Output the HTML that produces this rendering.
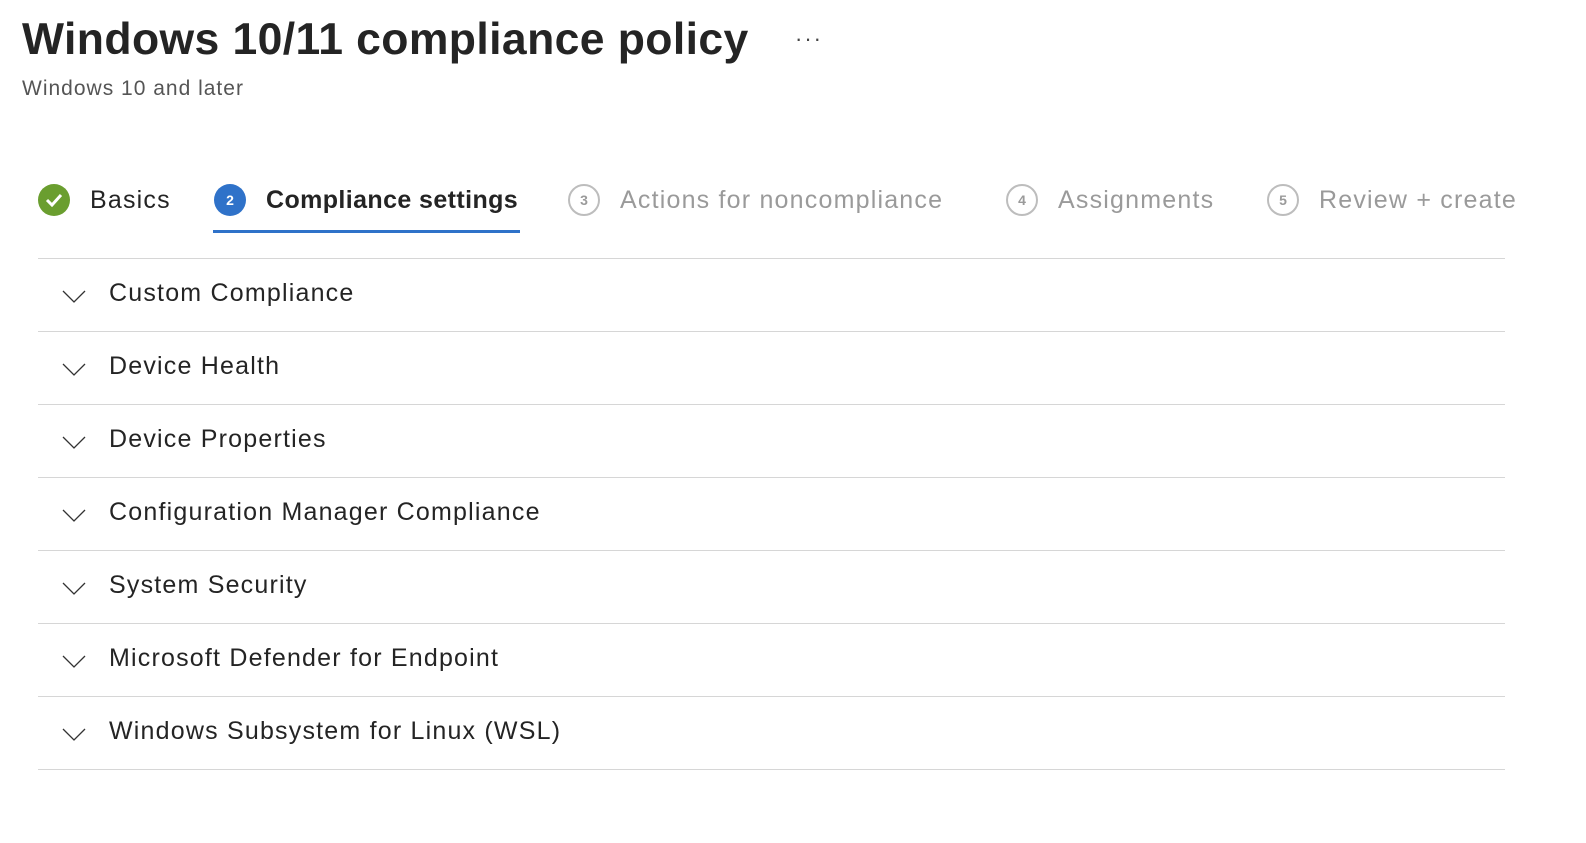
<!DOCTYPE html>
<html><head><style>
body{margin:0;background:#fff;font-family:"Liberation Sans",sans-serif;color:#242424;width:1586px;height:782px;overflow:hidden;position:relative}
.abs{position:absolute;white-space:nowrap}
h1{position:absolute;left:22px;top:15px;margin:0;font-size:44.5px;font-weight:bold;letter-spacing:0.4px}
.sub{left:22px;top:77px;font-size:21px;color:#555;letter-spacing:1px}
.dots{left:795px;top:26px;font-size:22px;color:#444;letter-spacing:2px}
.step{position:absolute;top:183px;height:34px;display:flex;align-items:center;font-size:25px;letter-spacing:1.2px}
.c{width:32px;height:32px;border-radius:50%;box-sizing:border-box;display:flex;align-items:center;justify-content:center;font-size:14px;font-weight:bold;margin-right:20px;letter-spacing:0}
.g{color:#9a9a9a}.g .c{border:2px solid #bdbdbd;color:#9a9a9a;width:32px;height:32px}
.row{position:absolute;left:38px;width:1467px;height:73px;border-top:1.5px solid #d6d6d6;font-size:25px;letter-spacing:1.2px}
.row span{position:absolute;left:71px;top:20px}
.row svg{position:absolute;left:24px;top:31px}
</style></head><body>
<h1>Windows 10/11 compliance policy</h1>
<div class="abs sub">Windows 10 and later</div>
<div class="abs dots">···</div>
<div class="step" style="left:38px"><div class="c" style="background:#6a9e2f"><svg width="18" height="14" viewBox="0 0 18 14"><path d="M2 7l5 5L16 2" fill="none" stroke="#fff" stroke-width="3"/></svg></div>Basics</div>
<div class="step" style="left:214px;font-weight:bold;letter-spacing:0.4px"><div class="c" style="background:#2f72c9;color:#fff">2</div>Compliance settings</div>
<div class="abs" style="left:213px;top:230px;width:307px;height:3px;background:#2f72c9"></div>
<div class="step g" style="left:568px"><div class="c">3</div>Actions for noncompliance</div>
<div class="step g" style="left:1006px"><div class="c">4</div>Assignments</div>
<div class="step g" style="left:1267px"><div class="c">5</div>Review + create</div>
<div class="row" style="top:258px"><svg width="24" height="13"><path d="M1 1l11 11L23 1" fill="none" stroke="#333" stroke-width="1.3"/></svg><span>Custom Compliance</span></div>
<div class="row" style="top:331px"><svg width="24" height="13"><path d="M1 1l11 11L23 1" fill="none" stroke="#333" stroke-width="1.3"/></svg><span>Device Health</span></div>
<div class="row" style="top:404px"><svg width="24" height="13"><path d="M1 1l11 11L23 1" fill="none" stroke="#333" stroke-width="1.3"/></svg><span>Device Properties</span></div>
<div class="row" style="top:477px"><svg width="24" height="13"><path d="M1 1l11 11L23 1" fill="none" stroke="#333" stroke-width="1.3"/></svg><span>Configuration Manager Compliance</span></div>
<div class="row" style="top:550px"><svg width="24" height="13"><path d="M1 1l11 11L23 1" fill="none" stroke="#333" stroke-width="1.3"/></svg><span>System Security</span></div>
<div class="row" style="top:623px"><svg width="24" height="13"><path d="M1 1l11 11L23 1" fill="none" stroke="#333" stroke-width="1.3"/></svg><span>Microsoft Defender for Endpoint</span></div>
<div class="row" style="top:696px"><svg width="24" height="13"><path d="M1 1l11 11L23 1" fill="none" stroke="#333" stroke-width="1.3"/></svg><span>Windows Subsystem for Linux (WSL)</span></div>
<div class="row" style="top:769px"></div>
</body></html>
